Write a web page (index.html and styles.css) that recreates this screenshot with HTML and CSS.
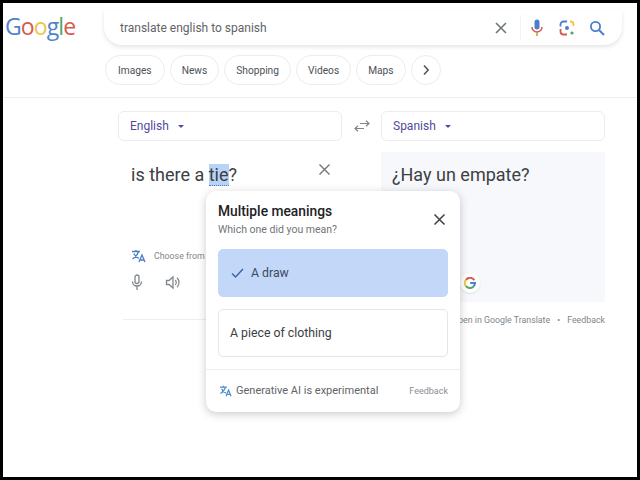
FILE: index.html
```html
<!DOCTYPE html>
<html lang="en">
<head>
<meta charset="utf-8">
<title>translate english to spanish</title>
<link rel="stylesheet" href="styles.css">
</head>
<body>
<div class="frame">
  <header class="top">
    <div class="logo"><span class="b">G</span><span class="r">o</span><span class="y">o</span><span class="b">g</span><span class="g">l</span><span class="r">e</span></div>
    <div class="top-main">
      <div class="search">
        <span class="query">translate english to spanish</span>
        <svg class="ic-x" width="14" height="14" viewBox="0 0 14 14"><path d="M2 2l10 10M12 2L2 12" stroke="#70757a" stroke-width="1.6" fill="none"/></svg>
        <span class="sep"></span>
        <svg class="ic-mic" width="12" height="18" viewBox="0 0 12 18"><rect x="3.5" y="0.5" width="5" height="10" rx="2.5" fill="#4a7fd0"/><path d="M1 8a5 5 0 0 0 10 0" stroke="#d9584c" stroke-width="1.5" fill="none"/><path d="M6 13v4" stroke="#c9a13a" stroke-width="1.6"/></svg>
        <svg class="ic-lens" width="16" height="16" viewBox="0 0 16 16" fill="none"><path d="M1.500 6.500V4.500a3 3 0 0 1 3-3H8" stroke="#4a7fd0" stroke-width="1.800"/><path d="M11 1.500h.5a3 3 0 0 1 3 3V6" stroke="#eec643" stroke-width="1.800"/><path d="M1.500 9v2.500a3 3 0 0 0 3 3H8" stroke="#d9584c" stroke-width="1.800"/><circle cx="8" cy="8" r="2" fill="#4a7fd0"/><circle cx="13" cy="13" r="1.600" fill="#4fa868"/></svg>
        <svg class="ic-search" width="16" height="16" viewBox="0 0 16 16" fill="none"><circle cx="6.500" cy="6.500" r="4.600" stroke="#4a7fd0" stroke-width="1.800"/><path d="M10 10l5 5" stroke="#4a7fd0" stroke-width="1.900"/></svg>
      </div>
      <nav class="chips">
        <span class="chip chip-first">Images</span>
        <span class="chip">News</span>
        <span class="chip">Shopping</span>
        <span class="chip">Videos</span>
        <span class="chip">Maps</span>
        <span class="chip chip-more"><svg width="8" height="12" viewBox="0 0 8 12" fill="none"><path d="M2 1.500L6.200 6 2 10.500" stroke="#4d5156" stroke-width="1.500"/></svg></span>
      </nav>
    </div>
  </header>

  <main class="translator">
    <div class="lang-row">
      <div class="lang">English<span class="caret"></span></div>
      <svg class="swap" width="16" height="12" viewBox="0 0 16 12" fill="none"><path d="M15 3.500H6M12 0.800l3 2.700-3 2.700M1 8.500h9M4 5.800L1 8.500l3 2.700" stroke="#80868b" stroke-width="1.200"/></svg>
      <div class="lang lang-target">Spanish<span class="caret"></span></div>
    </div>
    <div class="panels">
      <section class="source">
        <div class="source-head">
          <p class="phrase">is there a <span class="mark">tie</span>?</p>
          <svg width="13" height="13" viewBox="0 0 13 13"><path d="M1.500 1.500l10 10M11.500 1.500l-10 10" stroke="#70757a" stroke-width="1.400" fill="none"/></svg>
        </div>
        <div class="choose">
          <svg class="ic-tr" width="16" height="14" viewBox="0 0 16 14" fill="none"><path d="M1 2.500h8M5 1v1.500M7.500 2.500C6.500 6 4 8.500 1.500 10M2.800 4.500C4 7 6 8.500 8 9.500" stroke="#4a7fc4" stroke-width="1.300"/><path d="M8 13l3-7 3 7M9.200 11h3.600" stroke="#4a7fc4" stroke-width="1.300"/></svg>
          <span>Choose from</span>
        </div>
        <div class="tools">
          <svg width="12" height="17" viewBox="0 0 12 17" fill="none"><rect x="4" y="1" width="4" height="8.500" rx="2" stroke="#80868b" stroke-width="1.300"/><path d="M1.500 7.500a4.500 4.500 0 0 0 9 0M6 12v4" stroke="#80868b" stroke-width="1.300"/></svg>
          <svg width="16" height="15" viewBox="0 0 16 15" fill="none"><path d="M1.500 5.500h2.500L8 2v11L4 9.500H1.500z" stroke="#80868b" stroke-width="1.300"/><path d="M10.200 5a3.500 3.500 0 0 1 0 5M12 2.800a6.500 6.500 0 0 1 0 9.400" stroke="#80868b" stroke-width="1.200"/></svg>
        </div>
      </section>
      <section class="target-col">
        <div class="target">
          <p class="phrase">¿Hay un empate?</p>
          <span class="g-badge"><svg width="12" height="12" viewBox="0 0 12 12" fill="none"><path d="M10.300 3.300A5 5 0 0 0 2 2.800" stroke="#d9584c" stroke-width="2"/><path d="M2 2.800a5 5 0 0 0 0 6.400" stroke="#eec643" stroke-width="2"/><path d="M2 9.200a5 5 0 0 0 7.500.3" stroke="#4fa868" stroke-width="2"/><path d="M9.500 9.500A5 5 0 0 0 11 6H6.200" stroke="#4a7fd0" stroke-width="2"/></svg></span>
        </div>
        <div class="target-foot"><span>Open in Google Translate</span><span>•</span><span>Feedback</span></div>
      </section>
    </div>
  </main>

  <aside class="popover">
    <div class="pop-body">
      <div class="pop-head">
        <div>
          <h2>Multiple meanings</h2>
          <p>Which one did you mean?</p>
        </div>
        <svg width="13" height="13" viewBox="0 0 13 13"><path d="M1.500 1.500l10 10M11.500 1.500l-10 10" stroke="#3c4043" stroke-width="1.500" fill="none"/></svg>
      </div>
      <div class="option selected">
        <svg width="13" height="10" viewBox="0 0 13 10" fill="none"><path d="M1 5.500l3.500 3.500L12 1" stroke="#3f6296" stroke-width="1.400"/></svg>
        <span>A draw</span>
      </div>
      <div class="option">A piece of clothing</div>
    </div>
    <div class="pop-foot">
      <svg width="14" height="12" viewBox="0 0 16 14" fill="none"><path d="M1 2.500h8M5 1v1.500M7.500 2.500C6.500 6 4 8.500 1.500 10M2.800 4.500C4 7 6 8.500 8 9.500" stroke="#4a8fd0" stroke-width="1.400"/><path d="M8 13l3-7 3 7M9.200 11h3.600" stroke="#4a8fd0" stroke-width="1.400"/></svg>
      <span class="exp">Generative AI is experimental</span>
      <span class="fb">Feedback</span>
    </div>
  </aside>
</div>
</body>
</html>
```

FILE: styles.css
```css
* { box-sizing: border-box; }
html, body { margin: 0; padding: 0; background: #000; }
body { width: 640px; height: 480px; overflow: hidden; font-family: Roboto, "Liberation Sans", sans-serif; }
p, h2 { margin: 0; }

.frame {
  position: relative;
  width: 634px;
  height: 474px;
  margin: 3px;
  background: #fff;
  overflow: hidden;
}

.top {
  display: flex;
  height: 95px;
  border-bottom: 1px solid #eeeff0;
}
.logo {
  width: 101px;
  padding: 7px 0 0 2px;
  font-family: "Open Sans", sans-serif;
  font-size: 23px;
  line-height: 32px;
  letter-spacing: -0.900px;
  font-weight: 400;
}
.b { color: #4f83cf; }
.r { color: #d9584c; }
.y { color: #eec643; }
.g { color: #4fa868; }

.top-main { display: flex; flex-direction: column; gap: 10px; }
.search {
  display: flex;
  align-items: center;
  width: 518px;
  height: 35px;
  margin-top: 7px;
  padding: 0 0 0 16px;
  border-radius: 0 0 18px 18px;
  box-shadow: 0 2px 4px rgba(60, 64, 67, 0.14);
  background: #fff;
}
.query { width: 374px; font-size: 12px; color: #5f6368; }
.sep { width: 1px; height: 26px; margin: 0 10px 0 12px; background: #f3f3f3; }
.ic-lens { margin-left: 16px; }
.ic-search { margin-left: 14px; }

.chips { display: flex; gap: 5px; margin-left: 1px; }
.chip {
  display: flex;
  align-items: center;
  height: 30px;
  padding: 0 11px;
  border: 1px solid #ececec;
  border-radius: 15px;
  font-size: 10.200px;
  color: #4d5156;
}
.chip-first { padding: 0 12px; }
.chip-more { width: 30px; padding: 0; justify-content: center; }

.translator { padding: 13px 32px 0 115px; }
.lang-row { display: flex; align-items: center; }
.lang {
  display: flex;
  align-items: center;
  width: 224px;
  height: 30px;
  padding-left: 11px;
  border: 1px solid #ececee;
  border-radius: 6px;
  font-size: 12px;
  color: #4f4a9e;
}
.caret {
  width: 0;
  height: 0;
  margin-left: 9px;
  border-left: 3.500px solid transparent;
  border-right: 3.500px solid transparent;
  border-top: 3.500px solid #4f4a9e;
}
.swap { margin: 0 11px 0 12px; }

.panels { display: flex; margin-top: 11px; }
.source {
  width: 258px;
  height: 168px;
  margin-left: 5px;
  padding: 0 8px;
  border-bottom: 1px solid #eeeff0;
}
.source-head {
  display: flex;
  align-items: flex-start;
  justify-content: space-between;
  padding: 10px 0 0 0;
  margin-right: 42px;
}
.source-head svg { margin-top: 1px; }
.phrase { font-size: 18px; line-height: 25px; color: #3c4043; }
.mark { background: #b9d3f6; border-bottom: 1.500px dotted #4a7fc4; }
.choose {
  display: flex;
  align-items: center;
  gap: 7px;
  margin-top: 62px;
  font-size: 8.800px;
  color: #80868b;
}
.tools { display: flex; gap: 22px; align-items: center; margin-top: 11px; }

.target-col { width: 224px; }
.target {
  position: relative;
  height: 150px;
  padding: 10px 11px;
  background: #f6f8fb;
}
.g-badge {
  position: absolute;
  left: 79px;
  top: 121px;
  display: flex;
  align-items: center;
  justify-content: center;
  width: 20px;
  height: 20px;
  border-radius: 50%;
  background: #fff;
  box-shadow: 0 1px 2px rgba(60, 64, 67, 0.12);
}
.target-foot {
  display: flex;
  justify-content: flex-end;
  gap: 7px;
  margin-top: 12.500px;
  font-size: 8.800px;
  color: #80868b;
}

.popover {
  position: absolute;
  left: 203px;
  top: 188px;
  width: 254px;
  height: 221px;
  border-radius: 10px;
  background: #fff;
  box-shadow: 0 2px 8px rgba(60, 64, 67, 0.28);
}
.pop-body { padding: 13px 12px 0 12px; }
.pop-head {
  display: flex;
  justify-content: space-between;
  align-items: center;
  padding-right: 2px;
  height: 31px;
}
.pop-head h2 { font-size: 13.800px; line-height: 16px; font-weight: 500; color: #202124; }
.pop-head p { margin-top: 5px; font-size: 10.500px; line-height: 12px; color: #70757a; }
.option {
  display: flex;
  align-items: center;
  gap: 7px;
  height: 48px;
  margin-top: 12px;
  padding: 0 11px;
  border: 1px solid #e6e6e8;
  border-radius: 5px;
  font-size: 12.300px;
  color: #3c4043;
}
.selected {
  margin-top: 14px;
  padding-left: 12px;
  background: #c3d7f9;
  border-color: #c3d7f9;
  color: #3c4a5e;
}
.pop-foot {
  display: flex;
  align-items: center;
  margin-top: 12px;
  height: 42px;
  padding: 0 12px 0 13px;
  border-top: 1px solid #eeeeee;
}
.exp { margin-left: 3px; font-size: 11px; color: #5f6368; }
.fb { margin-left: auto; font-size: 9px; color: #8a8e93; }
```
